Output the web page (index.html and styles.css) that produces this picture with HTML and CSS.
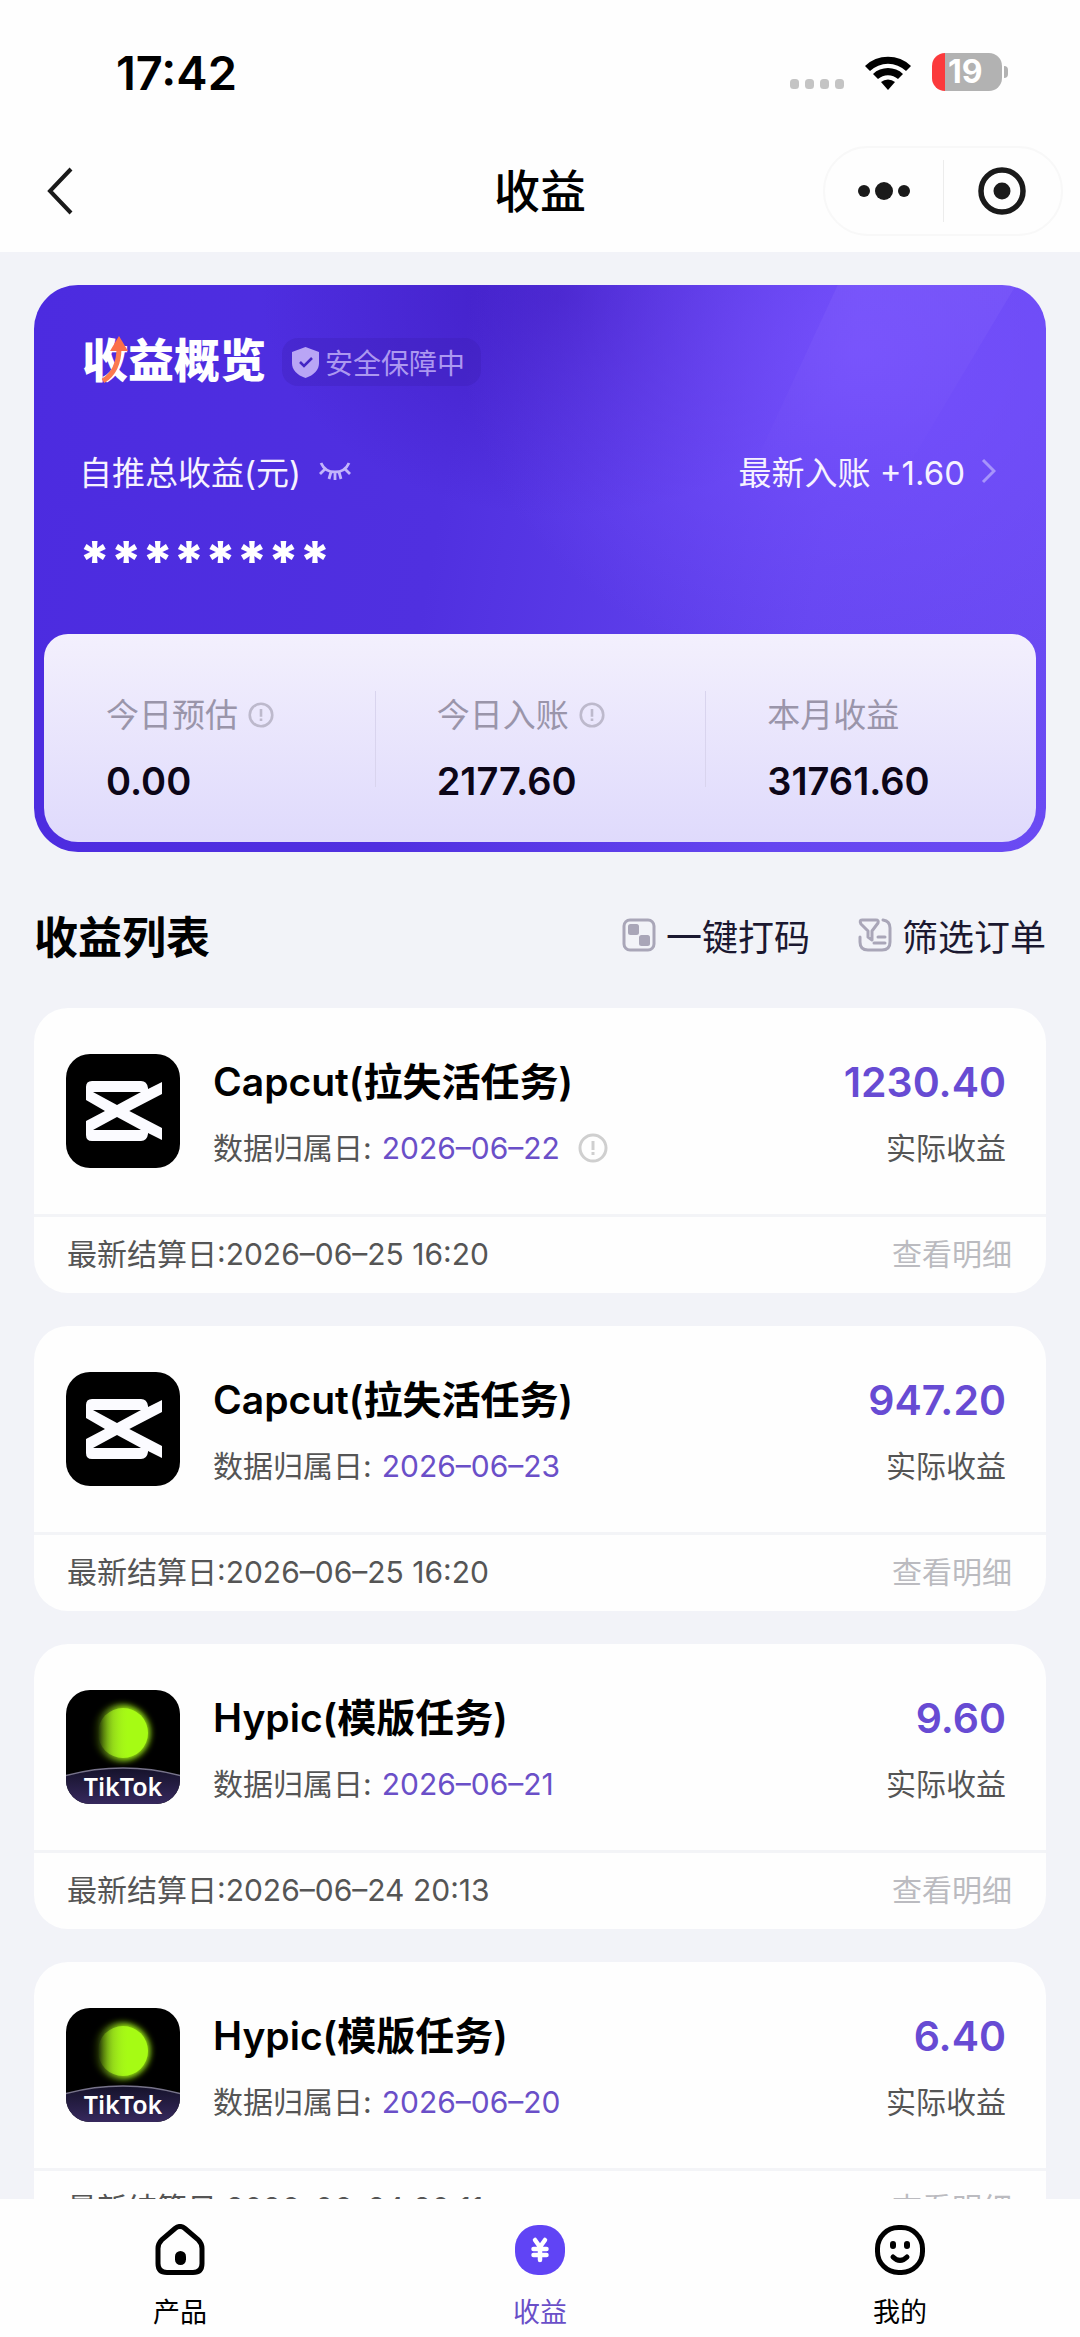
FILE: index.html
```html
<!DOCTYPE html>
<html lang="zh-CN">
<head>
    <meta charset="UTF-8">
    <meta name="viewport" content="width=device-width, initial-scale=1.0">
    <title>收益</title>
    <link rel="stylesheet" href="styles.css">
</head>
<body>
<!-- 公用图标 -->
<svg class="sprite" aria-hidden="true">
    <symbol id="i-info" viewBox="0 0 30 30">
        <circle cx="15" cy="15" r="13" fill="none" stroke="currentColor" stroke-width="3"/>
        <path d="M15 8v9M15 19v3" fill="none" stroke="currentColor" stroke-width="3"/>
    </symbol>
    <symbol id="i-capcut" viewBox="0 0 114 114">
        <rect width="114" height="114" rx="24" fill="#000"/>
        <path fill="#fbfbff" fill-rule="evenodd" d="M20 46V33q0-6 6-6h49q6 0 7 7v1l14-7v12L63.300 57 96 74v12l-14-7v1q-1 7-7 7H26q-6 0-6-6V67l19-10zM27 38l24 13 24-13zM27 76h48L51 63z"/>
    </symbol>
    <symbol id="i-hypic" viewBox="0 0 114 114">
        <defs>
            <linearGradient id="ball" x1="0" x2="1" y1="0" y2="0">
                <stop offset="0" stop-color="#a6f41c" stop-opacity="0"/>
                <stop offset=".3" stop-color="#a6f41c" stop-opacity=".65"/>
                <stop offset=".6" stop-color="#a6fb14"/>
            </linearGradient>
            <linearGradient id="base" x1="0" x2="0" y1="0" y2="1">
                <stop offset="0" stop-color="#15122a"/>
                <stop offset="1" stop-color="#382a60"/>
            </linearGradient>
            <filter id="soft" x="-20%" y="-20%" width="140%" height="140%">
                <feGaussianBlur stdDeviation="3"/>
            </filter>
            <clipPath id="tile"><rect width="114" height="114" rx="24"/></clipPath>
        </defs>
        <g clip-path="url(#tile)">
            <rect width="114" height="114" fill="#000"/>
            <ellipse cx="56" cy="43" rx="28" ry="28" fill="url(#ball)" filter="url(#soft)"/>
            <circle cx="57" cy="43" r="25" fill="url(#ball)"/>
            <path d="M-2 86q59-16 118 0v30H-2z" fill="url(#base)" stroke="#77738a" stroke-width="1.5"/>
        </g>
    </symbol>
</svg>

<div class="status">
    <span class="time">17:42</span>
    <div class="status-right">
        <svg width="54" height="10" viewBox="0 0 54 10" class="signal">
            <g fill="#c4c4c4">
                <rect width="9" height="10" rx="3.5"/>
                <rect x="15" width="9" height="10" rx="3.5"/>
                <rect x="30" width="9" height="10" rx="3.5"/>
                <rect x="45" width="9" height="10" rx="3.5"/>
            </g>
        </svg>
        <svg width="46" height="35" viewBox="0 0 46 35">
            <path d="M0 11a33 33 0 0 1 46 0l-5 5a26 26 0 0 0-36 0z"/>
            <path d="M8 19a22 22 0 0 1 30 0l-5 5a15 15 0 0 0-20 0z"/>
            <path d="M16 27a11 11 0 0 1 14 0l-7 8z"/>
        </svg>
        <div class="battery"><span>19</span></div>
    </div>
</div>

<header class="navbar">
    <button class="back" aria-label="返回">
        <svg width="26" height="48" viewBox="0 0 26 48"><path d="M24 2 3 24l21 22" fill="none" stroke="#1a1a1a" stroke-width="4"/></svg>
    </button>
    <h1>收益</h1>
    <div class="capsule">
        <button aria-label="更多">
            <svg width="54" height="20" viewBox="0 0 54 20" fill="#1a1a1a">
                <circle cx="7" cy="10" r="6"/><circle cx="27" cy="10" r="9"/><circle cx="47" cy="10" r="6"/>
            </svg>
        </button>
        <button aria-label="关闭">
            <svg width="48" height="48" viewBox="0 0 48 48">
                <circle cx="24" cy="24" r="21" fill="none" stroke="#1a1a1a" stroke-width="5.5"/>
                <circle cx="24" cy="24" r="8.5" fill="#1a1a1a"/>
            </svg>
        </button>
    </div>
</header>

<main>
    <section class="overview">
        <svg class="rays" viewBox="0 0 1011 567" preserveAspectRatio="none" aria-hidden="true">
            <defs>
                <linearGradient id="ray" x1="0" x2="0" y1="0" y2="1">
                    <stop offset="0" stop-color="#a98bff" stop-opacity=".12"/>
                    <stop offset="1" stop-color="#a98bff" stop-opacity="0"/>
                </linearGradient>
            </defs>
            <path d="M803 0h178L868 190H715z" fill="url(#ray)"/>
        </svg>
        <div class="overview-head">
            <h2>收益概览
                <svg class="arrow" width="28" height="50" viewBox="0 0 28 50">
                    <path d="M2 46Q18 36 18 13" fill="none" stroke="#fb7a50" stroke-width="5"/>
                    <path d="M18 1l9 15H9z" fill="#fb6f48"/>
                </svg>
            </h2>
            <span class="safe">
                <svg width="27" height="31" viewBox="0 0 27 31">
                    <path d="M13.500 0 27 5v11c0 7-5 12-13.500 15C5 28 0 23 0 16V5z" fill="#b9a5f5"/>
                    <path d="m8 15 4 4 8-8" fill="none" stroke="#4425c4" stroke-width="2.500"/>
                </svg>安全保障中</span>
        </div>
        <div class="overview-row">
            <button class="total">自推总收益(元)
                <svg width="32" height="20" viewBox="0 0 32 20" fill="none" stroke="#c3b5fb" stroke-width="2.800">
                    <path d="M2 2q4 9 14 9T30 2M6 8l-5 5M26 8l5 5M12 11l-2 7M20 11l2 7M16 11v8"/>
                </svg>
            </button>
            <a class="latest" href="#">最新入账 +1.60
                <svg width="15" height="26" viewBox="0 0 15 26"><path d="m2 2 11 11L2 24" fill="none" stroke="#a794fb" stroke-width="3"/></svg>
            </a>
        </div>
        <p class="stars">********</p>
        <div class="stats">
            <div class="stat">
                <p>今日预估 <svg class="info"><use href="#i-info"/></svg></p>
                <strong>0.00</strong>
            </div>
            <div class="stat">
                <p>今日入账 <svg class="info"><use href="#i-info"/></svg></p>
                <strong>2177.60</strong>
            </div>
            <div class="stat">
                <p>本月收益</p>
                <strong>31761.60</strong>
            </div>
        </div>
    </section>

    <div class="list-head">
        <h2>收益列表</h2>
        <button>
            <svg width="34" height="34" viewBox="0 0 34 34">
                <rect x="2" y="2" width="30" height="30" rx="6" fill="none" stroke="#a9a6b8" stroke-width="3"/>
                <rect x="6" y="6" width="11" height="11" rx="2.500" fill="#a9a6b8"/>
                <rect x="17" y="17" width="11" height="11" rx="2.500" fill="#a9a6b8"/>
            </svg>一键打码</button>
        <button>
            <svg width="34" height="34" viewBox="0 0 34 34" fill="none" stroke="#a9a6b8" stroke-width="3" stroke-linejoin="round" stroke-linecap="round">
                <path d="M4 2h14q3 0 2 3l-6 8v9l-4-3v-6L3 6Q1 2 4 2z"/>
                <path d="M25 2q7 1 7 8v14q0 8-8 8H10q-8 0-8-8v-5M20 19h7M16 25h11"/>
            </svg>筛选订单</button>
    </div>

    <article class="card">
        <div class="card-main">
            <svg class="logo"><use href="#i-capcut"/></svg>
            <div class="card-info">
                <h3>Capcut(拉失活任务)</h3>
                <p>数据归属日: <time>2026–06–22</time> <svg class="info"><use href="#i-info"/></svg></p>
            </div>
            <div class="card-money">
                <strong>1230.40</strong>
                <p>实际收益</p>
            </div>
        </div>
        <div class="card-foot">
            <span>最新结算日:2026–06–25 16:20</span>
            <a href="#">查看明细</a>
        </div>
    </article>

    <article class="card">
        <div class="card-main">
            <svg class="logo"><use href="#i-capcut"/></svg>
            <div class="card-info">
                <h3>Capcut(拉失活任务)</h3>
                <p>数据归属日: <time>2026–06–23</time></p>
            </div>
            <div class="card-money">
                <strong>947.20</strong>
                <p>实际收益</p>
            </div>
        </div>
        <div class="card-foot">
            <span>最新结算日:2026–06–25 16:20</span>
            <a href="#">查看明细</a>
        </div>
    </article>

    <article class="card">
        <div class="card-main">
            <svg class="logo"><use href="#i-hypic"/><text x="57" y="106" text-anchor="middle" class="tile-text">TikTok</text></svg>
            <div class="card-info">
                <h3>Hypic(模版任务)</h3>
                <p>数据归属日: <time>2026–06–21</time></p>
            </div>
            <div class="card-money">
                <strong>9.60</strong>
                <p>实际收益</p>
            </div>
        </div>
        <div class="card-foot">
            <span>最新结算日:2026–06–24 20:13</span>
            <a href="#">查看明细</a>
        </div>
    </article>

    <article class="card">
        <div class="card-main">
            <svg class="logo"><use href="#i-hypic"/><text x="57" y="106" text-anchor="middle" class="tile-text">TikTok</text></svg>
            <div class="card-info">
                <h3>Hypic(模版任务)</h3>
                <p>数据归属日: <time>2026–06–20</time></p>
            </div>
            <div class="card-money">
                <strong>6.40</strong>
                <p>实际收益</p>
            </div>
        </div>
        <div class="card-foot">
            <span>最新结算日:2026–06–24 20:11</span>
            <a href="#">查看明细</a>
        </div>
    </article>
</main>

<nav class="tabbar">
    <a href="#">
        <svg width="52" height="52" viewBox="0 0 52 52">
            <path d="M21 4.500q5-4 10 0l13 11q4 4 4 9v15q0 9-9 9H13q-9 0-9-9v-15q0-5 4-9z" fill="none" stroke="#000" stroke-width="5"/>
            <rect x="21" y="27" width="11" height="14" rx="5.500"/>
        </svg>
        <span>产品</span>
    </a>
    <a href="#" class="active">
        <svg width="52" height="52" viewBox="0 0 52 52">
            <rect x="1" y="1" width="50" height="50" rx="23" fill="#6044f5"/>
            <path d="m21 16 5 7 5-7M19.500 25h13M19.500 31h13M26 24v12" fill="none" stroke="#fff" stroke-width="4.500" stroke-linecap="round"/>
        </svg>
        <span>收益</span>
    </a>
    <a href="#">
        <svg width="52" height="52" viewBox="0 0 52 52" fill="none" stroke="#000" stroke-width="5">
            <rect x="3.500" y="3.500" width="45" height="45" rx="21"/>
            <path d="M19 20v2M33 20v2" stroke-width="6" stroke-linecap="round"/>
            <path d="M19 33q7 7 14 0" stroke-linecap="round"/>
        </svg>
        <span>我的</span>
    </a>
</nav>
</body>
</html>
```
FILE: styles.css
```css
* {
    margin: 0;
    padding: 0;
    box-sizing: border-box;
}

body {
    height: 100vh;
    display: flex;
    flex-direction: column;
    background-color: #f2f3f8;
    color: #000;
    font-family: Inter, "Noto Sans CJK SC", sans-serif;
    font-size: 30px;
    overflow: hidden;
}

button {
    border: none;
    background: none;
    font: inherit;
    color: inherit;
    cursor: pointer;
}

a {
    color: inherit;
    text-decoration: none;
}

svg {
    flex: none;
}

.sprite {
    position: absolute;
    width: 0;
    height: 0;
}

/* 状态栏 */
.status {
    flex: none;
    display: flex;
    justify-content: space-between;
    align-items: center;
    height: 144px;
    padding: 0 78px 0 116px;
    background-color: #fefefe;
}

.time {
    font-size: 47px;
    font-weight: 600;
}

.status-right {
    display: flex;
    align-items: center;
    gap: 21px;
}

.signal {
    margin-top: 24px;
}

.battery {
    position: relative;
    width: 70px;
    height: 38px;
    border-radius: 13px;
    background: linear-gradient(to right, #fb3a3c 13px, #b2b2b2 13px);
    color: #fff;
    font-size: 32px;
    font-weight: 700;
    line-height: 38px;
    padding-left: 16px;
}

.battery::after {
    content: "";
    position: absolute;
    right: -6px;
    top: 13px;
    width: 4px;
    height: 12px;
    border-radius: 0 4px 4px 0;
    background-color: #b2b2b2;
}

/* 导航栏 */
.navbar {
    flex: none;
    display: grid;
    grid-template-columns: 1fr auto 1fr;
    align-items: center;
    height: 108px;
    padding: 0 17px 14px 47px;
    background-color: #fefefe;
}

.back {
    display: flex;
    justify-self: start;
}

.navbar h1 {
    font-size: 46px;
    font-weight: 500;
    line-height: 60px;
    margin-right: 30px;
}

.capsule {
    justify-self: end;
    display: flex;
    width: 240px;
    height: 90px;
    border: 2px solid #f8f8f8;
    border-radius: 45px;
}

.capsule button {
    flex: 1;
    display: flex;
    align-items: center;
    justify-content: center;
}

.capsule button + button {
    background: linear-gradient(#ececec, #ececec) left center / 1px 62px no-repeat;
}

main {
    flex: 1;
    min-height: 0;
    overflow-y: auto;
    scrollbar-width: none;
    padding: 33px 34px 0;
}

/* 收益概览 */
.overview {
    position: relative;
    height: 567px;
    display: flex;
    flex-direction: column;
    padding: 10px;
    border-radius: 44px;
    color: #f6f2ff;
    font-size: 33px;
    overflow: hidden;
    background:
        radial-gradient(ellipse 400px 330px at 82% 12%, rgba(120, 82, 255, .8), rgba(120, 82, 255, 0)),
        radial-gradient(ellipse 300px 220px at 52% 2%, rgba(60, 24, 188, .7), rgba(60, 24, 188, 0)),
        linear-gradient(100deg, #4c2be0 0%, #5030e0 40%, #6546f0 75%, #6b4bf3 100%);
}

.rays {
    position: absolute;
    left: 0;
    top: 0;
    width: 100%;
    height: 100%;
}

.overview-head,
.overview-row,
.stars,
.stats {
    position: relative;
}

.overview-head {
    display: flex;
    align-items: center;
    gap: 16px;
    height: 134px;
    padding-left: 38px;
}

.overview-head h2 {
    position: relative;
    color: #fff;
    font-size: 46px;
    font-weight: 900;
    line-height: 60px;
    padding-bottom: 4px;
}

.arrow {
    position: absolute;
    left: 19px;
    top: 5px;
}

.safe {
    display: flex;
    align-items: center;
    gap: 6px;
    height: 48px;
    padding: 0 16px 0 10px;
    border-radius: 16px;
    background-color: rgba(56, 28, 172, .28);
    color: #ac98f0;
    font-size: 28px;
}

.overview-row {
    display: flex;
    align-items: center;
    justify-content: space-between;
    height: 84px;
    padding: 0 40px 0 35px;
}

.total,
.latest {
    display: flex;
    align-items: center;
    gap: 18px;
}

.latest {
    gap: 16px;
}

.stars {
    height: 121px;
    padding-left: 35px;
    color: #fff;
    font-size: 54px;
    font-weight: 800;
    line-height: 96px;
}

.stats {
    flex: 1;
    display: grid;
    grid-template-columns: repeat(3, 1fr);
    align-items: center;
    padding-top: 20px;
    border-radius: 24px 24px 34px 34px;
    background: linear-gradient(#f3f0fd, #dfdafc);
    color: #9a95aa;
}

.stat {
    padding-left: 62px;
}

.stat + .stat {
    background: linear-gradient(#d9d4ee, #d9d4ee) left top / 1px 96px no-repeat;
}

.stat p {
    display: flex;
    align-items: center;
    gap: 10px;
    line-height: 48px;
}

.stat strong {
    display: block;
    margin-top: 18px;
    color: #0c0618;
    font-size: 38px;
    font-weight: 600;
    line-height: 48px;
}

.info {
    width: 26px;
    height: 26px;
    color: #bdb9cc;
}

/* 列表标题 */
.list-head {
    display: flex;
    align-items: center;
    gap: 48px;
    height: 156px;
    padding-top: 10px;
    color: #1b1830;
}

.list-head h2 {
    margin-right: auto;
    color: #000;
    font-size: 44px;
    font-weight: 700;
}

.list-head button {
    display: flex;
    align-items: center;
    gap: 10px;
    font-size: 36px;
}

/* 收益卡片 */
.card {
    margin-bottom: 33px;
    border-radius: 34px;
    background-color: #fefefe;
    color: #555;
}

.card-main {
    display: flex;
    align-items: center;
    gap: 33px;
    height: 206px;
    padding: 0 40px 0 32px;
}

.logo {
    width: 114px;
    height: 114px;
}

.tile-text {
    fill: #fff;
    font-family: "Noto Sans", sans-serif;
    font-size: 25px;
    font-weight: 600;
}

.card-info {
    flex: 1;
}

.card h3 {
    color: #000;
    font-size: 39px;
    font-weight: 600;
    line-height: 56px;
}

.card-info,
.card-money {
    padding-top: 4px;
}

.card-main p {
    display: flex;
    align-items: center;
    gap: 10px;
    margin-top: 14px;
    line-height: 48px;
}

.card time {
    color: #6a4fc8;
}

.card .info {
    width: 30px;
    height: 30px;
    margin-left: 8px;
    color: #cfcfcf;
}

.card-money {
    display: flex;
    flex-direction: column;
    align-items: flex-end;
}

.card-money strong {
    color: #674bd3;
    font-size: 41px;
    font-weight: 600;
    line-height: 56px;
}

.card-foot {
    display: flex;
    align-items: center;
    justify-content: space-between;
    height: 79px;
    padding: 0 34px 6px 33px;
    border-top: 3px solid #f3f4f7;
}

.card-foot a {
    color: #bbbbc0;
}

/* 底部标签栏 */
.tabbar {
    flex: none;
    display: flex;
    height: 138px;
    padding-top: 25px;
    background-color: #fefefe;
    font-size: 27px;
}

.tabbar a {
    flex: 1;
    display: flex;
    flex-direction: column;
    align-items: center;
    gap: 17px;
    line-height: 40px;
}

.tabbar .active {
    color: #6a4fc8;
}
```
